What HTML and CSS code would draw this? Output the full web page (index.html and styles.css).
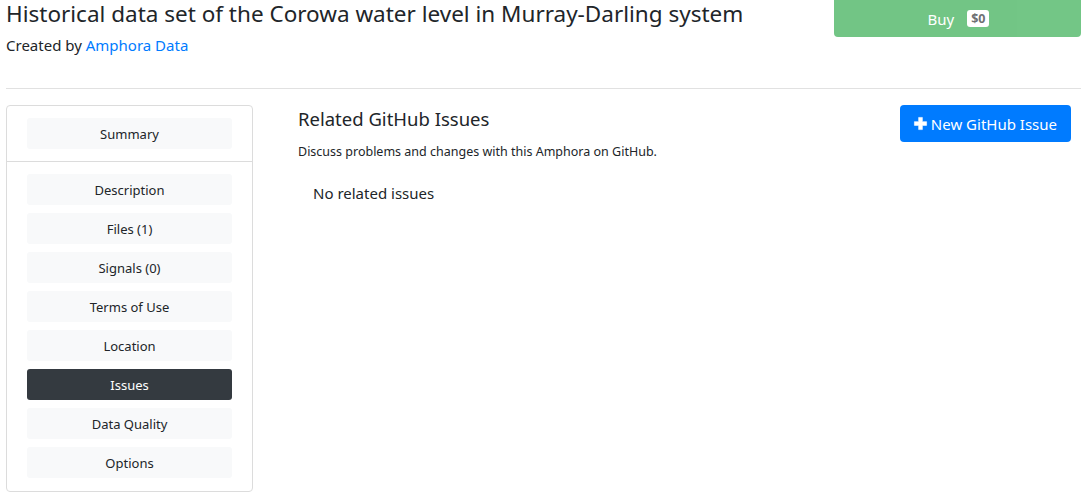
FILE: index.html
```html
<!DOCTYPE html>
<html>
<head>
<meta charset="utf-8">
<link rel="stylesheet" href="styles.css">
</head>
<body>
<div class="page">
  <div class="header">
    <div class="heading">
      <h4 class="title">Historical data set of the Corowa water level in Murray-Darling system</h4>
      <div class="creator">Created by <a href="#" class="link">Amphora Data</a></div>
    </div>
    <button class="buy" disabled>Buy <span class="badge">$0</span></button>
  </div>
  <hr class="rule">
  <div class="main">
    <div class="sidebar">
      <div class="nav-top">
        <div class="nav-btn">Summary</div>
      </div>
      <div class="nav-list">
        <div class="nav-btn">Description</div>
        <div class="nav-btn">Files (1)</div>
        <div class="nav-btn">Signals (0)</div>
        <div class="nav-btn">Terms of Use</div>
        <div class="nav-btn">Location</div>
        <div class="nav-btn active">Issues</div>
        <div class="nav-btn">Data Quality</div>
        <div class="nav-btn">Options</div>
      </div>
    </div>
    <div class="content">
      <div class="content-head">
        <div>
          <h5 class="sub-title">Related GitHub Issues</h5>
          <div class="desc">Discuss problems and changes with this Amphora on GitHub.</div>
        </div>
        <button class="new-issue"><svg class="plus" viewBox="0 0 16 16" width="15" height="15"><path d="M6 1.5h4v4.5h4.5v4H10v4.5H6V10H1.5V6H6z" fill="#fff" stroke="#fff" stroke-width="0.6" stroke-linejoin="round"/></svg>New GitHub Issue</button>
      </div>
      <div class="empty">No related issues</div>
    </div>
  </div>
</div>
</body>
</html>
```
FILE: styles.css
```css
* { box-sizing: border-box; }
html, body { margin: 0; padding: 0; background: #fff; }
body {
  font-family: "Noto Sans", "Open Sans", sans-serif;
  color: #212529;
  overflow: hidden;
}
.page { padding: 0 0 0 6px; }
.header { display: flex; justify-content: space-between; align-items: flex-start; }
.title {
  margin: 0;
  font-weight: 400;
  font-size: 22.5px;
  line-height: 28px;
  white-space: nowrap;
}
.creator { font-size: 15px; line-height: 22px; margin-top: 6px; }
.link { color: #007bff; text-decoration: none; }
.buy {
  width: 247px;
  height: 37px;
  border: none;
  border-radius: 0 0 4px 4px;
  background: #28a745;
  opacity: .65;
  color: #fff;
  font-family: inherit;
  font-size: 15px;
  display: flex; align-items: center; justify-content: center; gap: 13px;
  padding: 0 0 0 2px;
  margin-top: 0;
}
.badge {
  background: #fff;
  color: #212529;
  font-weight: 700;
  font-size: 12.5px;
  border-radius: 3px;
  padding: 0 4px;
  line-height: 17px;
}
.rule {
  border: none;
  border-top: 1px solid #e1e1e1;
  margin: 32px 0 16px 0;
}
.main { display: flex; }
.sidebar {
  width: 247px;
  border: 1px solid #dcdcdc;
  border-radius: 4px;
  flex: none;
}
.nav-top { padding: 12px 20px; border-bottom: 1px solid #dcdcdc; }
.nav-list { padding: 12px 20px 13px; display: flex; flex-direction: column; gap: 8px; }
.nav-btn {
  height: 31px;
  background: #f8f9fa;
  border-radius: 3px;
  font-size: 13px;
  display: flex; align-items: center; justify-content: center;
  color: #212529;
}
.nav-btn.active { background: #343a40; color: #fff; }
.content { flex: 1; padding: 0 10px 0 45px; }
.content-head { display: flex; justify-content: space-between; align-items: flex-start; }
.sub-title { margin: 0; font-weight: 400; font-size: 18.5px; line-height: 28px; padding-top: 0; }
.desc { font-size: 12.5px; margin-top: 10px; }
.new-issue {
  height: 37px;
  background: #007bff;
  color: #fff;
  border: none;
  border-radius: 4px;
  font-family: inherit;
  font-size: 15px;
  padding: 0 14px 0 13px;
  display: flex; align-items: center; gap: 3px;
}
.plus { display: block; }
.empty { font-size: 15px; padding-left: 15px; margin-top: 23px; }
```
